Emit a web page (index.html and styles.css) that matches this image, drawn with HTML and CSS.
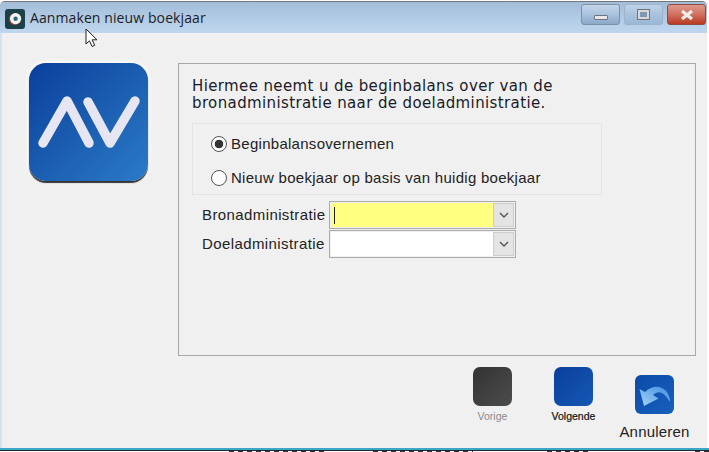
FILE: index.html
```html
<!DOCTYPE html>
<html lang="nl">
<head>
  <meta charset="UTF-8">
  <title>Aanmaken nieuw boekjaar</title>
  <link rel="stylesheet" href="styles.css">
</head>
<body>

  <div class="window">
    <div class="titlebar">
      <svg class="app-icon" width="20" height="20" viewBox="0 0 20 20">
        <rect width="20" height="20" rx="3" fill="#1a4148"/>
        <circle cx="10" cy="10" r="6" fill="#a8443c"/>
        <circle cx="10.6" cy="9.6" r="5.6" fill="#f2f4f4"/>
        <circle cx="10.6" cy="9.8" r="2.2" fill="#2a6a78"/>
      </svg>
      <span class="title">Aanmaken nieuw boekjaar</span>
      <div class="win-btns">
        <div class="win-btn"><span class="min-glyph"></span></div>
        <div class="win-btn win-btn-max"><span class="max-glyph"></span></div>
        <div class="win-btn win-btn-close">
          <svg width="16" height="12" viewBox="0 0 16 12"><path d="M3 2l10 8M13 2L3 10" stroke="#f1ecea" stroke-width="3.2" fill="none"/></svg>
        </div>
      </div>
    </div>

    <div class="content">
      <div class="main-row">
        <div class="logo">
          <svg width="119" height="118" viewBox="0 0 119 118">
            <path d="M14 80L38 38L60 80M59 39L81 80L106 38" stroke="#e6e6f2" stroke-width="9.5" stroke-linecap="round" stroke-linejoin="round" fill="none"/>
          </svg>
        </div>

        <div class="panel">
          <p class="intro">Hiermee neemt u de beginbalans over van de<br>bronadministratie naar de doeladministratie.</p>

          <div class="radio-group">
            <div class="radio-row"><span class="radio radio-on"></span>Beginbalansovernemen</div>
            <div class="radio-row"><span class="radio"></span>Nieuw boekjaar op basis van huidig boekjaar</div>
          </div>

          <div class="field-row">
            <label>Bronadministratie</label>
            <div class="combo">
              <div class="combo-input combo-active"><span class="caret"></span></div>
              <div class="combo-btn"><svg width="12" height="8" viewBox="0 0 12 8"><path d="M2 2l4 4 4-4" stroke="#555" stroke-width="1.4" fill="none"/></svg></div>
            </div>
          </div>
          <div class="field-row">
            <label>Doeladministratie</label>
            <div class="combo">
              <div class="combo-input"></div>
              <div class="combo-btn"><svg width="12" height="8" viewBox="0 0 12 8"><path d="M2 2l4 4 4-4" stroke="#555" stroke-width="1.4" fill="none"/></svg></div>
            </div>
          </div>
        </div>
      </div>

      <div class="footer">
        <div class="nav-btn">
          <div class="nav-icon nav-icon-grey"></div>
          <span class="nav-label nav-label-off">Vorige</span>
        </div>
        <div class="nav-btn">
          <div class="nav-icon nav-icon-blue"></div>
          <span class="nav-label">Volgende</span>
        </div>
        <div class="cancel-btn">
          <div class="cancel-icon">
            <svg width="39" height="39" viewBox="0 0 39 39">
              <defs>
                <linearGradient id="arrowFill" x1="0" y1="1" x2="1" y2="0">
                  <stop offset="0" stop-color="#a4d4f8"/>
                  <stop offset="1" stop-color="#3f8fe0"/>
                </linearGradient>
              </defs>
              <path d="M4.5 14L9 31L23.5 23.5L18 20C24 14 30 18 35 27C35 14 22 6 10 17Z" fill="url(#arrowFill)"/>
            </svg>
          </div>
          <span class="cancel-label">Annuleren</span>
        </div>
      </div>
    </div>
  </div>

  <div class="strip"></div>

  <svg class="cursor" width="14" height="20" viewBox="0 0 14 20">
    <path d="M1 1v15l3.5-3.2 2.6 5.7 2.6-1.2-2.6-5.5H12Z" fill="#fff" stroke="#222" stroke-width="1"/>
  </svg>

</body>
</html>
```

FILE: styles.css
```css
html, body {
  margin: 0;
  padding: 0;
}

body {
  width: 709px;
  height: 452px;
  overflow: hidden;
  background: #fff;
  font-family: 'Liberation Sans', Arial, sans-serif;
  color: #222;
  position: relative;
}

.window {
  width: 707px;
  height: 447px;
  margin-top: 1px;
  box-sizing: border-box;
  border-top: 1px solid #777;
  border-radius: 5px 5px 0 0;
  display: flex;
  flex-direction: column;
  overflow: hidden;
  background: #d2e2f2;
}

.titlebar {
  height: 31px;
  flex: none;
  display: flex;
  align-items: center;
  padding-left: 5px;
  background: linear-gradient(#a3bdd8, #b4cde7 60%, #bfd6ee);
}

.app-icon {
  flex: none;
  margin-top: 2px;
}

.title {
  margin-left: 5px;
  font-family: 'Open Sans', sans-serif;
  font-size: 14px;
  letter-spacing: 0.1px;
  color: #1c1c24;
}

.win-btns {
  margin-left: auto;
  margin-right: 1px;
  margin-top: -6px;
  display: flex;
  gap: 4px;
}

.win-btn {
  width: 39px;
  height: 21px;
  box-sizing: border-box;
  border: 1px solid #7d90a6;
  border-radius: 3px;
  background: linear-gradient(#c3d6ea, #a9c2dc 50%, #8ba9c8);
  display: flex;
  align-items: center;
  justify-content: center;
}

.win-btn-max {
  border-color: #9db3ca;
  background: linear-gradient(#bed2e7, #a9c3de 50%, #9ab7d5);
}

.win-btn-close {
  border-color: #8d4a44;
  background: linear-gradient(#dd9a8c, #d0705e 50%, #b83a22);
}

.min-glyph {
  width: 12px;
  height: 3px;
  margin-top: 5px;
  background: #e8e8e8;
  border: 1px solid #6b7480;
  border-radius: 1px;
}

.max-glyph {
  width: 7px;
  height: 5px;
  border: 2px solid #d8d8d8;
  outline: 1px solid #6b7480;
  background: #7f97b3;
}

.content {
  flex: 1;
  margin-left: 2px;
  background: #f0f0f0;
  display: flex;
  flex-direction: column;
}

.main-row {
  display: flex;
  align-items: flex-start;
  padding: 30px 0 0 27px;
}

.logo {
  width: 119px;
  height: 118px;
  flex: none;
  border-radius: 17px;
  background: linear-gradient(135deg, #0a3f9c, #1b5db0 50%, #2b7bc8);
  box-shadow: 0 2px 1px #333, 0 0 4px 1px #fff;
}

.logo svg {
  display: block;
}

.panel {
  width: 518px;
  height: 293px;
  margin-left: 30px;
  flex: none;
  box-sizing: border-box;
  border: 1px solid #a8a8a8;
  padding: 14px 0 0 13px;
}

.intro {
  margin: 0;
  font-family: 'DejaVu Sans', Verdana, sans-serif;
  font-size: 15px;
  letter-spacing: 0.38px;
  line-height: 17px;
  color: #1a1a2a;
}

.radio-group {
  width: 410px;
  height: 72px;
  margin-top: 11px;
  box-sizing: border-box;
  border: 1px solid #e4e4e4;
  padding: 5px 0 0 18px;
  display: flex;
  flex-direction: column;
  gap: 5px;
}

.radio-row {
  height: 29px;
  display: flex;
  align-items: center;
  gap: 4px;
  font-size: 15px;
  letter-spacing: 0.28px;
  white-space: nowrap;
}

.radio {
  width: 16px;
  height: 16px;
  box-sizing: border-box;
  border: 1px solid #555;
  border-radius: 50%;
  background: #fff;
  flex: none;
}

.radio-on {
  background: radial-gradient(circle, #333 0 4px, #fff 4.6px);
}

.field-row {
  display: flex;
  align-items: center;
  height: 28px;
  margin: 6px 0 -5px 10px;
}

.field-row label {
  width: 127px;
  margin-top: -2px;
  font-size: 15px;
  letter-spacing: 0.4px;
  flex: none;
  white-space: nowrap;
}

.combo {
  width: 187px;
  height: 28px;
  box-sizing: border-box;
  border: 1px solid #ababab;
  padding: 1px;
  display: flex;
}

.combo-input {
  flex: 1;
  background: #fff;
  display: flex;
  align-items: center;
  padding-left: 3px;
}

.combo-active {
  background: #ffff80;
}

.caret {
  width: 1px;
  height: 17px;
  background: #222;
}

.combo-btn {
  width: 21px;
  background: #e4e4e4;
  border: 1px solid #cdcdcd;
  box-sizing: border-box;
  display: flex;
  align-items: center;
  justify-content: center;
}

.footer {
  flex: 1;
  display: flex;
  align-items: flex-start;
  padding: 11px 0 0 450px;
}

.nav-btn {
  width: 81px;
  display: flex;
  flex-direction: column;
  align-items: center;
  gap: 3px;
}

.nav-icon {
  width: 39px;
  height: 39px;
  border-radius: 7px;
}

.nav-icon-grey {
  background: linear-gradient(135deg, #333, #4c4c4c);
}

.nav-icon-blue {
  background: linear-gradient(135deg, #0a3f9c, #1558b4);
}

.nav-label {
  font-size: 10.5px;
  line-height: 14px;
  color: #111;
  -webkit-text-stroke: 0.2px #111;
}

.nav-label-off {
  color: #8a8a8a;
  -webkit-text-stroke: 0;
}

.cancel-btn {
  width: 81px;
  margin-top: 8px;
  display: flex;
  flex-direction: column;
  align-items: center;
  gap: 10px;
}

.cancel-icon {
  width: 39px;
  height: 39px;
  border-radius: 6px;
  background: linear-gradient(135deg, #0d4aa8, #1660bc);
}

.cancel-icon svg {
  display: block;
}

.cancel-label {
  font-size: 15px;
  line-height: 16px;
  letter-spacing: 0.2px;
}

/* what shows of the window behind this one */
.strip {
  height: 4px;
  box-sizing: border-box;
  border-top: 2px solid #3aa6c8;
  background:
    repeating-linear-gradient(90deg, #333 0 5px, #fff 5px 9px) 229px 1px / 96px 1px no-repeat,
    repeating-linear-gradient(90deg, #333 0 5px, #fff 5px 9px) 373px 1px / 100px 1px no-repeat,
    repeating-linear-gradient(90deg, #333 0 5px, #fff 5px 9px) 547px 1px / 45px 1px no-repeat,
    repeating-linear-gradient(90deg, #333 0 5px, #fff 5px 9px) 695px 1px / 14px 1px no-repeat,
    linear-gradient(#1c2a30 1px, #fff 1px);
}

.cursor {
  position: absolute;
  left: 85px;
  top: 28px;
}
```
